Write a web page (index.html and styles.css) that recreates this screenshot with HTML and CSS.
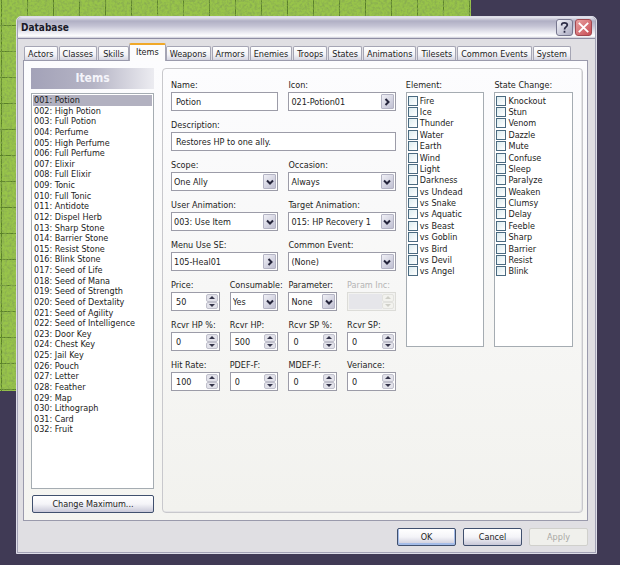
FILE: index.html
```
<!DOCTYPE html>
<html lang="en">
<head>
    <meta charset="UTF-8">
    <meta name="viewport" content="width=device-width, initial-scale=1.0">
    <title>Database</title>
    <link rel="stylesheet" href="styles.css">
</head>
<body>
    <div class="map">
        <svg aria-hidden="true">
            <filter id="grain">
                <feTurbulence type="fractalNoise" baseFrequency="0.4" numOctaves="2" seed="4"/>
                <feColorMatrix values="0 0 0 0 0.25  0 0 0 0 0.42  0 0 0 0 0.08  2.4 0 0 0 -0.9"/>
            </filter>
            <rect width="100%" height="100%" filter="url(#grain)"/>
        </svg>
    </div>
    <main class="window">
        <header class="titlebar">
            <h1>Database</h1>
            <button class="title-btn help" aria-label="Help">
                <svg viewBox="0 0 16 16"><path d="M5 5.800V5c0-1.300 1.200-2 2.800-2s3.200.8 3.200 2.300c0 2-3 2-3 4.700M8 11.500v2" fill="none" stroke="#2a2a44" stroke-width="1.800"/></svg>
            </button>
            <button class="title-btn close" aria-label="Close">
                <svg viewBox="0 0 16 16"><path d="M3 3l10 10M13 3L3 13" fill="none" stroke="#fff" stroke-width="2"/></svg>
            </button>
        </header>

        <nav class="tabs">
            <button>Actors</button>
            <button>Classes</button>
            <button>Skills</button>
            <button class="active">Items</button>
            <button>Weapons</button>
            <button>Armors</button>
            <button>Enemies</button>
            <button>Troops</button>
            <button>States</button>
            <button>Animations</button>
            <button>Tilesets</button>
            <button>Common Events</button>
            <button>System</button>
        </nav>

        <div class="page">
            <section class="sidebar">
                <h2>Items</h2>
                <div class="list">
                    <ol>
                        <li class="selected">001: Potion</li>
                        <li>002: High Potion</li>
                        <li>003: Full Potion</li>
                        <li>004: Perfume</li>
                        <li>005: High Perfume</li>
                        <li>006: Full Perfume</li>
                        <li>007: Elixir</li>
                        <li>008: Full Elixir</li>
                        <li>009: Tonic</li>
                        <li>010: Full Tonic</li>
                        <li>011: Antidote</li>
                        <li>012: Dispel Herb</li>
                        <li>013: Sharp Stone</li>
                        <li>014: Barrier Stone</li>
                        <li>015: Resist Stone</li>
                        <li>016: Blink Stone</li>
                        <li>017: Seed of Life</li>
                        <li>018: Seed of Mana</li>
                        <li>019: Seed of Strength</li>
                        <li>020: Seed of Dextality</li>
                        <li>021: Seed of Agility</li>
                        <li>022: Seed of Intelligence</li>
                        <li>023: Door Key</li>
                        <li>024: Chest Key</li>
                        <li>025: Jail Key</li>
                        <li>026: Pouch</li>
                        <li>027: Letter</li>
                        <li>028: Feather</li>
                        <li>029: Map</li>
                        <li>030: Lithograph</li>
                        <li>031: Card</li>
                        <li>032: Fruit</li>
                    </ol>
                </div>
                <button class="btn">Change Maximum...</button>
            </section>

            <form class="group">
                <div class="fields">
                    <div class="field half">
                        <label for="name">Name:</label>
                        <input type="text" id="name" value="Potion">
                    </div>
                    <div class="field half">
                        <label for="icon">Icon:</label>
                        <div class="box">
                            <input type="text" id="icon" value="021-Potion01" readonly>
                            <button type="button" class="arrow" aria-label="Choose icon"><svg viewBox="0 0 8 8"><path d="M2.500 1l3 3-3 3"/></svg></button>
                        </div>
                    </div>
                    <div class="field full">
                        <label for="description">Description:</label>
                        <input type="text" id="description" value="Restores HP to one ally.">
                    </div>
                    <div class="field half">
                        <label for="scope">Scope:</label>
                        <div class="box">
                            <select id="scope"><option>One Ally</option></select>
                            <span class="arrow"><svg viewBox="0 0 8 8"><path d="M1 2.500l3 3 3-3"/></svg></span>
                        </div>
                    </div>
                    <div class="field half">
                        <label for="occasion">Occasion:</label>
                        <div class="box">
                            <select id="occasion"><option>Always</option></select>
                            <span class="arrow"><svg viewBox="0 0 8 8"><path d="M1 2.500l3 3 3-3"/></svg></span>
                        </div>
                    </div>
                    <div class="field half">
                        <label for="user_animation">User Animation:</label>
                        <div class="box">
                            <select id="user_animation"><option>003: Use Item</option></select>
                            <span class="arrow"><svg viewBox="0 0 8 8"><path d="M1 2.500l3 3 3-3"/></svg></span>
                        </div>
                    </div>
                    <div class="field half">
                        <label for="target_animation">Target Animation:</label>
                        <div class="box">
                            <select id="target_animation"><option>015: HP Recovery 1</option></select>
                            <span class="arrow"><svg viewBox="0 0 8 8"><path d="M1 2.500l3 3 3-3"/></svg></span>
                        </div>
                    </div>
                    <div class="field half">
                        <label for="menu_se">Menu Use SE:</label>
                        <div class="box">
                            <input type="text" id="menu_se" value="105-Heal01" readonly>
                            <button type="button" class="arrow" aria-label="Choose sound"><svg viewBox="0 0 8 8"><path d="M2.500 1l3 3-3 3"/></svg></button>
                        </div>
                    </div>
                    <div class="field half">
                        <label for="common_event">Common Event:</label>
                        <div class="box">
                            <select id="common_event"><option>(None)</option></select>
                            <span class="arrow"><svg viewBox="0 0 8 8"><path d="M1 2.500l3 3 3-3"/></svg></span>
                        </div>
                    </div>
                    <div class="field">
                        <label for="price">Price:</label>
                        <div class="box">
                            <input type="number" id="price" value="50">
                            <span class="spin"><i></i><i></i></span>
                        </div>
                    </div>
                    <div class="field">
                        <label for="consumable">Consumable:</label>
                        <div class="box">
                            <select id="consumable"><option>Yes</option></select>
                            <span class="arrow"><svg viewBox="0 0 8 8"><path d="M1 2.500l3 3 3-3"/></svg></span>
                        </div>
                    </div>
                    <div class="field">
                        <label for="parameter">Parameter:</label>
                        <div class="box">
                            <select id="parameter"><option>None</option></select>
                            <span class="arrow"><svg viewBox="0 0 8 8"><path d="M1 2.500l3 3 3-3"/></svg></span>
                        </div>
                    </div>
                    <div class="field disabled">
                        <label for="param_inc">Param Inc:</label>
                        <div class="box">
                            <input type="number" id="param_inc" disabled>
                            <span class="spin"><i></i><i></i></span>
                        </div>
                    </div>
                    <div class="field">
                        <label for="rcvr_hp_rate">Rcvr HP %:</label>
                        <div class="box">
                            <input type="number" id="rcvr_hp_rate" value="0">
                            <span class="spin"><i></i><i></i></span>
                        </div>
                    </div>
                    <div class="field">
                        <label for="rcvr_hp">Rcvr HP:</label>
                        <div class="box">
                            <input type="number" id="rcvr_hp" value="500">
                            <span class="spin"><i></i><i></i></span>
                        </div>
                    </div>
                    <div class="field">
                        <label for="rcvr_sp_rate">Rcvr SP %:</label>
                        <div class="box">
                            <input type="number" id="rcvr_sp_rate" value="0">
                            <span class="spin"><i></i><i></i></span>
                        </div>
                    </div>
                    <div class="field">
                        <label for="rcvr_sp">Rcvr SP:</label>
                        <div class="box">
                            <input type="number" id="rcvr_sp" value="0">
                            <span class="spin"><i></i><i></i></span>
                        </div>
                    </div>
                    <div class="field">
                        <label for="hit_rate">Hit Rate:</label>
                        <div class="box">
                            <input type="number" id="hit_rate" value="100">
                            <span class="spin"><i></i><i></i></span>
                        </div>
                    </div>
                    <div class="field">
                        <label for="pdef">PDEF-F:</label>
                        <div class="box">
                            <input type="number" id="pdef" value="0">
                            <span class="spin"><i></i><i></i></span>
                        </div>
                    </div>
                    <div class="field">
                        <label for="mdef">MDEF-F:</label>
                        <div class="box">
                            <input type="number" id="mdef" value="0">
                            <span class="spin"><i></i><i></i></span>
                        </div>
                    </div>
                    <div class="field">
                        <label for="variance">Veriance:</label>
                        <div class="box">
                            <input type="number" id="variance" value="0">
                            <span class="spin"><i></i><i></i></span>
                        </div>
                    </div>
                </div>

                <fieldset class="checks">
                    <legend>Element:</legend>
                    <div class="check-list">
                        <label><input type="checkbox">Fire</label>
                        <label><input type="checkbox">Ice</label>
                        <label><input type="checkbox">Thunder</label>
                        <label><input type="checkbox">Water</label>
                        <label><input type="checkbox">Earth</label>
                        <label><input type="checkbox">Wind</label>
                        <label><input type="checkbox">Light</label>
                        <label><input type="checkbox">Darkness</label>
                        <label><input type="checkbox">vs Undead</label>
                        <label><input type="checkbox">vs Snake</label>
                        <label><input type="checkbox">vs Aquatic</label>
                        <label><input type="checkbox">vs Beast</label>
                        <label><input type="checkbox">vs Goblin</label>
                        <label><input type="checkbox">vs Bird</label>
                        <label><input type="checkbox">vs Devil</label>
                        <label><input type="checkbox">vs Angel</label>
                    </div>
                </fieldset>
                <fieldset class="checks">
                    <legend>State Change:</legend>
                    <div class="check-list">
                        <label><input type="checkbox">Knockout</label>
                        <label><input type="checkbox">Stun</label>
                        <label><input type="checkbox">Venom</label>
                        <label><input type="checkbox">Dazzle</label>
                        <label><input type="checkbox">Mute</label>
                        <label><input type="checkbox">Confuse</label>
                        <label><input type="checkbox">Sleep</label>
                        <label><input type="checkbox">Paralyze</label>
                        <label><input type="checkbox">Weaken</label>
                        <label><input type="checkbox">Clumsy</label>
                        <label><input type="checkbox">Delay</label>
                        <label><input type="checkbox">Feeble</label>
                        <label><input type="checkbox">Sharp</label>
                        <label><input type="checkbox">Barrier</label>
                        <label><input type="checkbox">Resist</label>
                        <label><input type="checkbox">Blink</label>
                    </div>
                </fieldset>
            </form>
        </div>

        <footer class="actions">
            <button class="btn default">OK</button>
            <button class="btn">Cancel</button>
            <button class="btn" disabled>Apply</button>
        </footer>
    </main>
</body>
</html>
```
FILE: styles.css
```
* {
    box-sizing: border-box;
}
body {
    margin: 0;
    padding: 16px 23px 12px 16px;
    background: #403a55;
    color: #1c1c22;
    font-family: "DejaVu Sans Condensed", "DejaVu Sans", sans-serif;
    font-size: 9px;
    line-height: 12px;
}
button, input, select {
    font: inherit;
    color: inherit;
    margin: 0;
    padding: 0;
    border-radius: 0;
}
h1, h2, ol {
    margin: 0;
    padding: 0;
}

/* game map showing behind the window */
.map {
    position: absolute;
    top: 0;
    left: 0;
    width: 471px;
    height: 391px;
    background-color: #98c44a;
    background-image:
        linear-gradient(90deg, #587f28 1px, transparent 1px),
        linear-gradient(transparent 25px, #587f28 25px);
    background-size: 26px 26px;
    background-position: 1px 0;
}
.map svg {
    display: block;
    width: 100%;
    height: 100%;
}

.window {
    position: relative;
    background: #e0dfe3;
    border: 1px solid #dddde8;
    border-radius: 5px 5px 0 0;
    box-shadow: inset 0 0 0 1px #a3a2b6;
    padding: 0 8px 7px 6px;
}

.titlebar {
    display: flex;
    align-items: center;
    gap: 2px;
    height: 22px;
    margin: 0 -7px 4px -5px;
    padding: 0 3px;
    border-bottom: 1px solid #8e8da3;
    border-radius: 4px 4px 0 0;
    background: linear-gradient(#e8e8f0, #b0afc4 4px, #c4c3d4 9px, #f4f4f8 17px, #fff 19px, #c8c8d6);
}
.titlebar h1 {
    flex: 1;
    font-size: 10px;
    color: #1a1a28;
}
.title-btn {
    width: 17px;
    height: 17px;
    border: 1px solid #77778f;
    border-radius: 3px;
    background: linear-gradient(135deg, #f4f4fa, #a9a9c0);
}
.title-btn svg {
    display: block;
    width: 15px;
    height: 15px;
}
.title-btn.close {
    border-color: #a04850;
    background: linear-gradient(135deg, #e8a0a0, #c84c54);
}

.tabs {
    display: flex;
    align-items: flex-end;
    gap: 1px;
    padding-left: 1px;
    height: 17px;
}
.tabs button {
    min-width: 31px;
    height: 14px;
    padding: 0 3px;
    border: 1px solid #a5a5b4;
    border-bottom: none;
    border-radius: 2px 2px 0 0;
    background: linear-gradient(#fff, #f2f2f6 60%, #d4d4e0);
    white-space: nowrap;
}
.tabs .active {
    height: 18px;
    margin: 0 -1px -1px;
    padding: 0 6px 2px;
    border-top: 2px solid #f0a828;
    background: #fcfcfd;
    z-index: 1;
}

.page {
    display: flex;
    gap: 8px;
    padding: 7px 4px 7px 7px;
    border: 1px solid #9a9aac;
    background: linear-gradient(#fcfcfe, #f4f4f0);
}

.sidebar {
    display: flex;
    flex-direction: column;
    width: 123px;
}
.sidebar h2 {
    height: 21px;
    margin-bottom: 4px;
    background: linear-gradient(90deg, #a3a2b8, #b5b4c5 50%, #ececf1);
    color: #f4f4fa;
    font-size: 12px;
    line-height: 21px;
    text-align: center;
}
.list {
    flex: 1;
    margin-bottom: 6px;
    padding: 1px;
    border: 1px solid #a5acb2;
    background: #fff;
}
.list ol {
    display: grid;
    grid-auto-rows: 1fr;
    height: 340px;
    list-style: none;
}
.list li {
    min-height: 0;
    padding-left: 1px;
    line-height: 11px;
    white-space: nowrap;
}
.list .selected {
    background: #b2b1c0;
}

.btn {
    height: 18px;
    border: 1px solid #40506e;
    border-radius: 2px;
    background: linear-gradient(#fff, #f4f4f8 50%, #c8c8d8);
    line-height: 14px;
}
.btn.default {
    box-shadow: inset 0 -1px 0 1px #a4bce8;
}
.btn:disabled {
    border-color: #d0d0cc;
    background: #f0f0ec;
    color: #a8a8a4;
}
.sidebar .btn {
    margin-left: 1px;
}

.group {
    flex: 1;
    display: grid;
    grid-template-columns: 226fr 79fr 79fr;
    align-items: start;
    column-gap: 10px;
    min-height: 445px;
    padding: 10px 9px 8px 8px;
    border: 1px solid #c8c8cc;
    border-radius: 4px;
    box-shadow: inset -1px -1px 0 #e4e4e6;
    background: linear-gradient(#fcfcfe, #f2f2ee);
}
.fields {
    display: grid;
    grid-template-columns: repeat(4, minmax(0, 1fr));
    gap: 8px 10px;
}
.half {
    grid-column: span 2;
}
.full {
    grid-column: span 4;
}
.field label {
    display: block;
    height: 13px;
    white-space: nowrap;
}
.field > input, .box {
    display: flex;
    width: 100%;
    height: 19px;
    border: 1px solid #9c9ca8;
    background: #fff;
}
.field > input {
    padding: 0 4px;
}
.box {
    padding: 1px;
}
.box input, .box select {
    flex: 1;
    min-width: 0;
    width: 0;
    padding-left: 1px;
    border: none;
    background: none;
    appearance: none;
}
.box input[type="number"] {
    padding-left: 3px;
    appearance: textfield;
}
.box input::-webkit-inner-spin-button {
    display: none;
}
.arrow {
    display: flex;
    align-items: center;
    justify-content: center;
    width: 13px;
    border: 1px solid #b4b4c4;
    border-radius: 1px;
    background: linear-gradient(135deg, #f0f0f6, #c0c0d2);
    pointer-events: none;
}
.arrow svg {
    width: 8px;
    height: 8px;
}
.arrow path {
    fill: none;
    stroke: #26263c;
    stroke-width: 2;
}
.spin {
    display: flex;
    flex-direction: column;
    width: 12px;
}
.spin i {
    flex: 1;
    display: flex;
    align-items: center;
    justify-content: center;
    border: 1px solid #c0c0cc;
    border-radius: 2px;
    background: #e2e2ea;
}
.spin i::before {
    content: "";
    border: 3px solid transparent;
    border-top-width: 0;
    border-bottom: 3px solid #34344a;
}
.spin i:last-child::before {
    transform: rotate(180deg);
}
.disabled {
    color: #b4b4b4;
}
.disabled .box {
    border-color: #dcdcd8;
    background: #f2f2f0;
}
.disabled .box input {
    background: #e6e6ea;
}
.disabled .spin i {
    border-color: #e2e2de;
    background: #f2f2ee;
}
.disabled .spin i::before {
    border-bottom-color: #cfcfc8;
}

.checks {
    min-width: 0;
    margin: 0;
    padding: 0;
    border: none;
}
.checks legend {
    height: 13px;
    padding: 0;
    white-space: nowrap;
}
.check-list {
    display: grid;
    grid-template-rows: repeat(16, 1fr);
    height: 255px;
    padding: 2px 1px 69px;
    border: 1px solid #a5acb2;
    background: #fff;
}
.check-list label {
    display: flex;
    align-items: center;
    gap: 2px;
    min-height: 0;
    white-space: nowrap;
}
.check-list input {
    appearance: none;
    width: 10px;
    height: 10px;
    border: 1px solid #4a6a80;
    background: linear-gradient(135deg, #dcecf0, #fff);
}

.actions {
    display: flex;
    justify-content: flex-end;
    gap: 7px;
    padding-top: 7px;
}
.actions .btn {
    width: 59px;
}
```
